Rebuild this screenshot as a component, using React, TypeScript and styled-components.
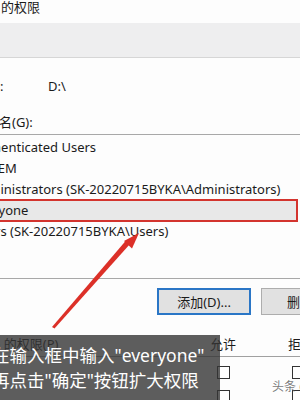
import React from 'react';
import styled, { createGlobalStyle } from 'styled-components';

const Global = createGlobalStyle`
  html, body { margin: 0; padding: 0; background: #fdfdfd; }
  body {
    width: 300px; height: 400px; overflow: hidden;
    font-family: "Noto Sans", "Noto Sans CJK SC", sans-serif;
    color: #1b1b1b;
  }
`;

const Page = styled.div`
  position: relative;
  width: 300px;
  height: 400px;
  overflow: hidden;
  background: #fdfdfd;
  font-size: 13px;
`;

const Title = styled.div`
  height: 23px;
  line-height: 14px;
  padding-left: 1px;
  white-space: nowrap;
`;

const TabBand = styled.div`
  height: 34px;
  background: #eeeeef;
  border-bottom: 1px solid #d6d6d6;
`;

const ObjectRow = styled.div`
  display: flex;
  margin-top: 18px;
  margin-left: -52px;
  height: 20px;
  line-height: 20px;
  white-space: nowrap;
`;

const ObjectLabel = styled.span`
  width: 100px;
  flex: none;
`;

const GroupLabel = styled.div`
  margin-top: 16px;
  margin-left: -53px;
  height: 20px;
  line-height: 20px;
  white-space: nowrap;
`;

const ListBox = styled.div`
  margin-top: 2px;
  height: 145px;
  box-sizing: border-box;
  border-top: 1px solid #a8a8a8;
  border-bottom: 1px solid #a8a8a8;
  padding-top: 2px;
  overflow: hidden;
`;

const Item = styled.div<{ $selected?: boolean; $indent?: number }>`
  height: 21px;
  line-height: 21px;
  white-space: nowrap;
  text-indent: ${p => -(p.$indent ?? 28)}px;
  box-sizing: border-box;
  width: ${p => (p.$selected ? '301px' : '100%')};
  margin-left: ${p => (p.$selected ? '-4px' : '0')};
  padding-left: ${p => (p.$selected ? '4px' : '0')};
  background: ${p => (p.$selected ? '#e8e8e8' : 'transparent')};
  outline: ${p => (p.$selected ? '2px solid #d3342e' : 'none')};
  outline-offset: -1px;
`;

const ButtonRow = styled.div`
  display: flex;
  gap: 10px;
  margin-top: 9px;
  padding-left: 157px;
`;

const Button = styled.div<{ $focused?: boolean }>`
  flex: none;
  width: 94px;
  height: 27px;
  box-sizing: border-box;
  display: flex;
  align-items: center;
  justify-content: center;
  background: #e1e1e1;
  border: ${p => (p.$focused ? '2px solid #2a76c6' : '1px solid #adadad')};
  white-space: nowrap;
`;

const PermHeader = styled.div`
  display: flex;
  margin-top: 19px;
  height: 22px;
  line-height: 20px;
  border-bottom: 1px solid #a0a0a0;
  white-space: nowrap;
`;

const Cell = styled.span<{ $w: number; $shift?: number }>`
  flex: none;
  width: ${p => p.$w}px;
  margin-left: ${p => p.$shift ?? 0}px;
`;

const PermRows = styled.div`
  padding-top: 9px;
`;

const PermRow = styled.div`
  display: flex;
  height: 24px;
  align-items: flex-start;
  white-space: nowrap;
  line-height: 13px;
`;

const Check = styled.span`
  display: block;
  width: 13px;
  height: 13px;
  box-sizing: border-box;
  border: 1px solid #333;
  background: #fff;
`;

const Caption = styled.div`
  position: absolute;
  left: 0;
  top: 335px;
  width: 220px;
  height: 70px;
  background: rgba(52, 52, 52, 0.8);
  color: #fff;
  font-size: 17.5px;
  line-height: 25px;
  padding-top: 8px;
  box-sizing: border-box;
  white-space: nowrap;
  overflow: hidden;
`;

const CaptionLine = styled.div`
  margin-left: -8px;
`;

const Watermark = styled.div`
  position: absolute;
  left: 272px;
  top: 377px;
  font-size: 12px;
  color: rgba(100, 100, 100, 0.85);
  white-space: nowrap;
`;

const ArrowLayer = styled.svg`
  position: absolute;
  left: 0;
  top: 0;
  width: 300px;
  height: 400px;
  pointer-events: none;
`;

export default function App() {
  return (
    <Page>
      <Global />
      <Title>的权限</Title>
      <TabBand />
      <ObjectRow>
        <ObjectLabel>对象名称:</ObjectLabel>
        <span>D:\</span>
      </ObjectRow>
      <GroupLabel>组或用户名(G):</GroupLabel>
      <ListBox>
        <Item>Authenticated Users</Item>
        <Item $indent={31}>SYSTEM</Item>
        <Item>Administrators (SK-20220715BYKA\Administrators)</Item>
        <Item $selected>Everyone</Item>
        <Item>Users (SK-20220715BYKA\Users)</Item>
      </ListBox>
      <ButtonRow>
        <Button $focused>添加(D)...</Button>
        <Button>删除(R)</Button>
      </ButtonRow>
      <PermHeader>
        <Cell $w={266} $shift={-56}>Everyone 的权限(P)</Cell>
        <Cell $w={78}>允许</Cell>
        <Cell $w={40}>拒绝</Cell>
      </PermHeader>
      <PermRows>
        <PermRow>
          <Cell $w={277} $shift={-60}>完全控制</Cell>
          <Cell $w={75}><Check /></Cell>
          <Cell $w={20}><Check /></Cell>
        </PermRow>
        <PermRow>
          <Cell $w={277} $shift={-60}>修改</Cell>
          <Cell $w={75}><Check /></Cell>
          <Cell $w={20}><Check /></Cell>
        </PermRow>
      </PermRows>
      <ArrowLayer viewBox="0 0 300 400">
        <polygon points="52,327 54.5,328.5 130,244 126,240.5" fill="#dc3028" />
        <polygon points="139,233 132,248.5 124,241" fill="#dc3028" />
      </ArrowLayer>
      <Caption>
        <CaptionLine>在输入框中输入"everyone"</CaptionLine>
        <CaptionLine>再点击"确定"按钮扩大权限</CaptionLine>
      </Caption>
      <Watermark>头条 @</Watermark>
    </Page>
  );
}
